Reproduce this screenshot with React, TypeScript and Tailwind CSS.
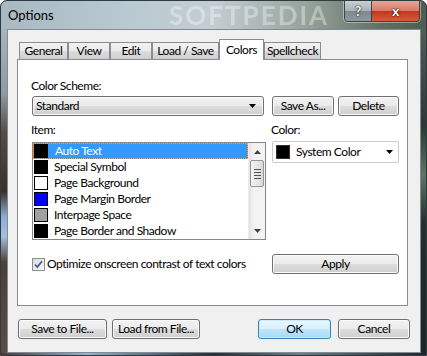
import React from 'react';

const face =
  'flex items-center rounded-[3px] border border-[#707070] bg-[linear-gradient(#f2f2f2_0%,#ebebeb_50%,#dddddd_50%,#cfcfcf_100%)] shadow-[inset_0_0_0_1px_#fbfbfb] text-black whitespace-nowrap';
const btn = `${face} h-[20px] justify-center`;

const items: { name: string; color: string }[] = [
  { name: 'Auto Text', color: '#000000' },
  { name: 'Special Symbol', color: '#000000' },
  { name: 'Page Background', color: '#ffffff' },
  { name: 'Page Margin Border', color: '#0000ff' },
  { name: 'Interpage Space', color: '#a0a0a0' },
  { name: 'Page Border and Shadow', color: '#000000' },
];

const tabs = [
  { label: 'General', w: 'w-[49px]' },
  { label: 'View', w: 'w-[42px]' },
  { label: 'Edit', w: 'w-[42px]' },
  { label: 'Load / Save', w: 'w-[67px]' },
  { label: 'Colors', w: 'w-[45px]', active: true },
  { label: 'Spellcheck', w: 'w-[57px]' },
];

const Arrow = () => (
  <svg width="7" height="4" viewBox="0 0 7 4">
    <path d="M0 0h7L3.5 4z" fill="#000" />
  </svg>
);

export default function App() {
  return (
    <div className="relative w-[427px] h-[356px] overflow-hidden rounded-t-[7px] border border-[#2f3b40] flex flex-col font-['Lato',sans-serif] text-[12px] tracking-[-0.45px] text-black bg-[#3a3430]">
      {/* watermark behind the title text */}
      <span className="pointer-events-none absolute left-[168px] top-[1px] text-[26px] font-bold tracking-[2px] text-white/35 leading-[26px] whitespace-nowrap blur-[0.6px]">
        SOFTPEDIA
      </span>

      {/* title bar */}
      <div className="h-[28px] shrink-0 flex items-start justify-between bg-[linear-gradient(90deg,#a9b9c2_0%,#b9c9d1_30%,#c3ced2_50%,#95a39b_72%,#5f6d62_90%,#4e5c52_100%)]">
        <span className="relative z-10 pl-[7px] pt-[6px] leading-[16px] text-[13px] tracking-normal">Options</span>
        <div className="relative z-10 flex mr-[6px] -mt-px rounded-b-[4px] border border-[#39444a] overflow-hidden shadow-[0_0_0_1px_rgba(255,255,255,0.4)]">
          <div className="w-[27px] h-[20px] flex items-center justify-center border-r border-[#39444a] bg-[linear-gradient(#c9d1d4_0%,#a7b1b6_50%,#7d898f_50%,#8d999e_100%)] text-white font-bold text-[13px] leading-none [text-shadow:0_0_2px_#222,0_0_1px_#000]">
            ?
          </div>
          <div className="w-[47px] h-[20px] flex items-center justify-center bg-[linear-gradient(#e8a596_0%,#d77b67_50%,#c2361d_50%,#d65a3d_100%)] text-white font-bold text-[14px] leading-none [text-shadow:0_0_2px_#300,0_0_1px_#000]">
            x
          </div>
        </div>
      </div>

      <div className="relative z-10 flex flex-1">
        <div className="w-[6px] bg-[linear-gradient(180deg,#a6b4bc_0%,#8f9aa0_20%,#5a4a44_32%,#3b2f2b_50%,#8eaed4_58%,#a7c0dc_64%,#4d3e38_72%,#5b4c45_100%)]" />

        {/* client area */}
        <div className="w-[414px] bg-[#f0f0f0] border border-[#7f8c94] flex flex-col pt-[9px] pl-[9px]">
          {/* tabs */}
          <div className="flex items-end h-[20px] ml-[2px]">
            {tabs.map((t) =>
              t.active ? (
                <div
                  key={t.label}
                  className={`${t.w} h-[21px] -mb-px relative z-10 bg-white border border-b-0 border-[#898c95] flex items-start justify-center pt-[2px] leading-[16px] whitespace-nowrap`}
                >
                  {t.label}
                </div>
              ) : (
                <div
                  key={t.label}
                  className={`${t.w} h-[17px] border border-b-0 border-[#898c95] bg-[linear-gradient(#f2f2f2_0%,#ebebeb_50%,#dddddd_50%,#cfcfcf_100%)] flex items-center justify-center leading-[16px] whitespace-nowrap`}
                >
                  {t.label}
                </div>
              )
            )}
          </div>

          {/* panel */}
          <div className="w-[391px] h-[247px] bg-white border border-[#898c95] pl-[14px] pt-[18px] flex flex-col">
            <div className="leading-[16px] -ml-px">Color Scheme:</div>
            <div className="flex mt-[2px]">
              <div className={`${face} h-[20px] w-[232px] justify-between pl-[3px] pr-[7px]`}>
                <span>Standard</span>
                <Arrow />
              </div>
              <div className={`${btn} w-[62px] ml-[8px]`}>Save As...</div>
              <div className={`${btn} w-[61px] ml-[4px]`}>Delete</div>
            </div>

            <div className="flex mt-[6px] leading-[16px]">
              <span className="w-[240px] -ml-px">Item:</span>
              <span>Color:</span>
            </div>

            <div className="flex mt-[4px]">
              <div className="w-[234px] h-[98px] border border-[#828790] flex">
                <div className="flex-1 flex flex-col">
                  {items.map((it, i) => (
                    <div
                      key={it.name}
                      className={`h-[16px] flex items-center whitespace-nowrap ${
                        i === 0 ? 'bg-[#3399ff] text-white border border-dotted border-[#f6a23c]' : ''
                      }`}
                    >
                      <span
                        className={`w-[14px] h-[14px] border border-black shrink-0 ${i === 0 ? 'ml-[0px]' : 'ml-px'}`}
                        style={{ backgroundColor: it.color }}
                      />
                      <span className={`leading-[16px] ${i === 0 ? 'ml-[7px]' : 'ml-[6px]'}`}>{it.name}</span>
                    </div>
                  ))}
                </div>
                {/* scrollbar */}
                <div className="w-[17px] flex flex-col bg-[linear-gradient(90deg,#e3e3e3_0%,#f3f3f3_30%,#f3f3f3_100%)] border-l border-[#ececec]">
                  <div className="h-[17px] flex items-center justify-center">
                    <svg width="7" height="4" viewBox="0 0 7 4">
                      <path d="M0 4h7L3.5 0z" fill="#444" />
                    </svg>
                  </div>
                  <div className="mx-px h-[27px] rounded-[2px] border border-[#959595] bg-[linear-gradient(90deg,#f3f3f3_0%,#e8e8e8_50%,#d8d8d8_100%)] flex flex-col items-center justify-center gap-[2px]">
                    <span className="w-[7px] h-px bg-[#555]" />
                    <span className="w-[7px] h-px bg-[#555]" />
                    <span className="w-[7px] h-px bg-[#555]" />
                    <span className="w-[7px] h-px bg-[#555]" />
                  </div>
                  <div className="flex-1" />
                  <div className="h-[17px] flex items-center justify-center">
                    <svg width="7" height="4" viewBox="0 0 7 4">
                      <path d="M0 0h7L3.5 4z" fill="#444" />
                    </svg>
                  </div>
                </div>
              </div>

              <div className="ml-[6px] -mt-px w-[127px] h-[22px] rounded-[2px] border border-[#c8cbd0] bg-white flex items-center pl-[3px] pr-[5px]">
                <span className="w-[14px] h-[14px] bg-black border border-[#333]" />
                <span className="ml-[6px] flex-1 leading-[16px] whitespace-nowrap">System Color</span>
                <Arrow />
              </div>
            </div>

            <div className="flex items-center mt-[14px]">
              <div className="w-[13px] h-[13px] border border-[#8e8f8f] bg-[linear-gradient(135deg,#dcdcdc_0%,#f6f6f6_100%)] flex items-center justify-center">
                <svg width="9" height="9" viewBox="0 0 9 9">
                  <path d="M1 4.5 3.3 7 8 1.2" fill="none" stroke="#4a5f97" strokeWidth="1.8" />
                </svg>
              </div>
              <span className="ml-[2px] w-[225px] leading-[16px] whitespace-nowrap">Optimize onscreen contrast of text colors</span>
              <div className={`${btn} w-[127px]`}>Apply</div>
            </div>
          </div>

          {/* bottom buttons */}
          <div className="flex mt-[13px] pr-[10px] justify-between">
            <div className="flex">
              <div className={`${btn} w-[89px] ml-px`}>Save to File...</div>
              <div className={`${btn} w-[88px] ml-[5px]`}>Load from File...</div>
            </div>
            <div className="flex">
              <div className="h-[20px] w-[73px] flex items-center justify-center rounded-[3px] border border-[#3c7fb1] bg-[linear-gradient(#eaf6fd_0%,#d9f0fc_50%,#bee6fd_50%,#a7d9f5_100%)] shadow-[inset_0_0_0_1px_#c9eaff]">
                OK
              </div>
              <div className={`${btn} w-[72px] ml-[7px]`}>Cancel</div>
            </div>
          </div>
        </div>

        <div className="flex-1 bg-[linear-gradient(180deg,#4f5d53_0%,#2b3a30_30%,#5d7564_45%,#24302a_60%,#1e2620_100%)]" />
      </div>
      <div className="h-[2px] shrink-0 bg-[linear-gradient(90deg,#4a3a34_0%,#8fb2d6_20%,#2a2d33_50%,#6a7d8a_70%,#20262a_100%)]" />
    </div>
  );
}
